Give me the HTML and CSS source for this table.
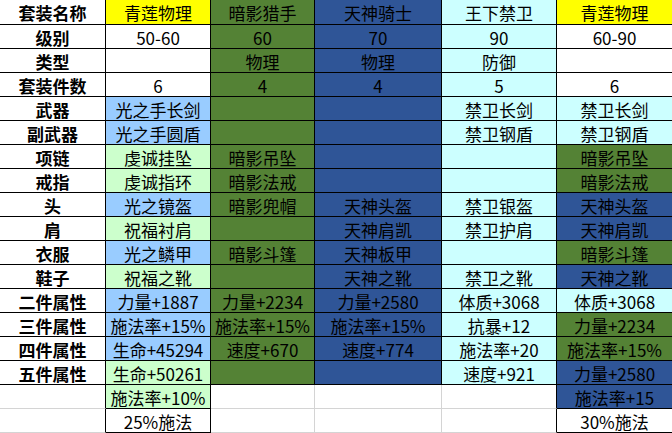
FILE: index.html
```html
<!DOCTYPE html>
<html lang="zh-CN">
<head>
<meta charset="utf-8">
<title>套装对比</title>
<link rel="stylesheet" href="styles.css">
</head>
<body>
<div class="sheet">
  <div class="cell h">套装名称</div><div class="cell y">青莲物理</div><div class="cell g">暗影猎手</div><div class="cell b">天神骑士</div><div class="cell c">王下禁卫</div><div class="cell y last">青莲物理</div>
  <div class="cell h">级别</div><div class="cell w">50-60</div><div class="cell g">60</div><div class="cell b">70</div><div class="cell c">90</div><div class="cell w last">60-90</div>
  <div class="cell h">类型</div><div class="cell w"></div><div class="cell g">物理</div><div class="cell b">物理</div><div class="cell c">防御</div><div class="cell w last"></div>
  <div class="cell h">套装件数</div><div class="cell w">6</div><div class="cell g">4</div><div class="cell b">4</div><div class="cell c">5</div><div class="cell w last">6</div>
  <div class="cell h">武器</div><div class="cell lb">光之手长剑</div><div class="cell g"></div><div class="cell b"></div><div class="cell c">禁卫长剑</div><div class="cell c last">禁卫长剑</div>
  <div class="cell h">副武器</div><div class="cell lb">光之手圆盾</div><div class="cell g"></div><div class="cell b"></div><div class="cell c">禁卫钢盾</div><div class="cell c last">禁卫钢盾</div>
  <div class="cell h">项链</div><div class="cell lg">虔诚挂坠</div><div class="cell g">暗影吊坠</div><div class="cell b"></div><div class="cell c"></div><div class="cell g last">暗影吊坠</div>
  <div class="cell h">戒指</div><div class="cell lg">虔诚指环</div><div class="cell g">暗影法戒</div><div class="cell b"></div><div class="cell c"></div><div class="cell g last">暗影法戒</div>
  <div class="cell h">头</div><div class="cell lb">光之镜盔</div><div class="cell g">暗影兜帽</div><div class="cell b">天神头盔</div><div class="cell c">禁卫银盔</div><div class="cell b last">天神头盔</div>
  <div class="cell h">肩</div><div class="cell lg">祝福衬肩</div><div class="cell g"></div><div class="cell b">天神肩凯</div><div class="cell c">禁卫护肩</div><div class="cell b last">天神肩凯</div>
  <div class="cell h">衣服</div><div class="cell lb">光之鳞甲</div><div class="cell g">暗影斗篷</div><div class="cell b">天神板甲</div><div class="cell c"></div><div class="cell g last">暗影斗篷</div>
  <div class="cell h">鞋子</div><div class="cell lg">祝福之靴</div><div class="cell g"></div><div class="cell b">天神之靴</div><div class="cell c">禁卫之靴</div><div class="cell b last">天神之靴</div>
  <div class="cell h">二件属性</div><div class="cell lb">力量+1887</div><div class="cell g">力量+2234</div><div class="cell b">力量+2580</div><div class="cell c">体质+3068</div><div class="cell c last">体质+3068</div>
  <div class="cell h">三件属性</div><div class="cell lb">施法率+15%</div><div class="cell g">施法率+15%</div><div class="cell b">施法率+15%</div><div class="cell c">抗暴+12</div><div class="cell g last">力量+2234</div>
  <div class="cell h">四件属性</div><div class="cell lb">生命+45294</div><div class="cell g">速度+670</div><div class="cell b">速度+774</div><div class="cell c">施法率+20</div><div class="cell g last">施法率+15%</div>
  <div class="cell h">五件属性</div><div class="cell lg">生命+50261</div><div class="cell g"></div><div class="cell b"></div><div class="cell c">速度+921</div><div class="cell b last">力量+2580</div>
  <div class="cell e edge"></div><div class="cell lg">施法率+10%</div><div class="cell e"></div><div class="cell e"></div><div class="cell e edge"></div><div class="cell b last">施法率+15</div>
  <div class="cell e edge"></div><div class="cell w">25%施法</div><div class="cell e"></div><div class="cell e"></div><div class="cell e edge"></div><div class="cell w last">30%施法</div>
</div>
</body>
</html>
```

FILE: styles.css
```css
* { box-sizing: border-box; }
html, body {
  margin: 0;
  padding: 0;
  background: #ffffff;
}
body {
  font-family: "Noto Sans CJK SC", "Noto Sans", sans-serif;
  font-size: 17px;
  color: #000000;
}
.sheet {
  display: grid;
  grid-template-columns: 106px 105px 104px 127px 115px 115px;
  grid-template-rows: 25px repeat(17, 24px);
  width: 672px;
}
.cell {
  display: flex;
  align-items: center;
  justify-content: center;
  white-space: nowrap;
  overflow: hidden;
  border-right: 1px solid #000000;
  border-bottom: 1px solid #000000;
  line-height: 1;
  padding-top: 1px;
}
.cell.last { border-right: none; }
.h { background: #ffffff; font-weight: 700; }
.w { background: #ffffff; }
.y { background: #ffff00; }
.g { background: #548235; }
.b { background: #2f5597; }
.c { background: #ccffff; }
.lb { background: #99ccff; }
.lg { background: #ccffcc; }
.e {
  background: #ffffff;
  border-right-color: #d4d4d4;
  border-bottom-color: #d4d4d4;
}
.e.edge { border-right-color: #000000; }
```
